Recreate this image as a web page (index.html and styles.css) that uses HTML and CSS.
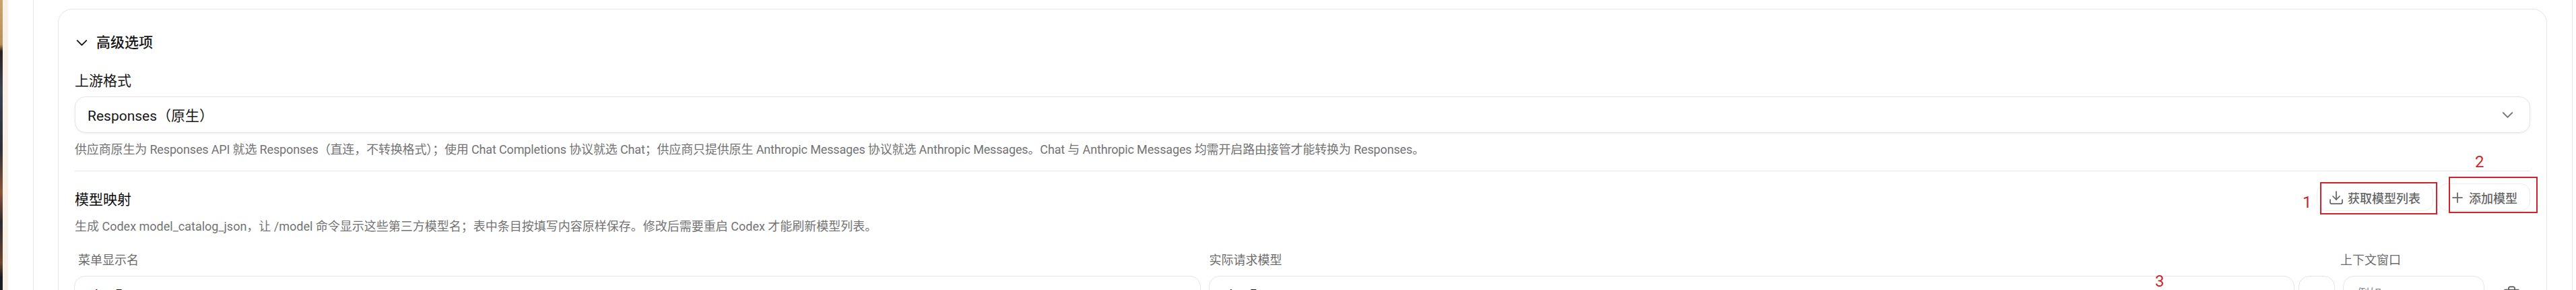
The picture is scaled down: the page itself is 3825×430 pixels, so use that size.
FILE: index.html
```html
<!DOCTYPE html>
<html lang="zh-CN">
<head>
    <meta charset="UTF-8">
    <meta name="viewport" content="width=device-width, initial-scale=1.0">
    <title>高级选项</title>
    <link rel="stylesheet" href="styles.css">
</head>
<body>

    <div class="photo-strip"></div>
    <div class="cream-strip"></div>

    <main class="content">
        <div class="panel">
            <section class="card">
                <div class="card-title">
                    <svg class="icon chevron-dark" viewBox="0 0 24 24"><path d="m6 9 6 6 6-6"/></svg>
                    <span>高级选项</span>
                </div>

                <div class="field-label">上游格式</div>
                <div class="select-box">
                    <span>Responses（原生）</span>
                    <svg class="icon chevron-gray" viewBox="0 0 24 24"><path d="m6 9 6 6 6-6"/></svg>
                </div>
                <p class="hint">供应商原生为 Responses API 就选 Responses（直连，不转换格式）；使用 Chat Completions 协议就选 Chat；供应商只提供原生 Anthropic Messages 协议就选 Anthropic Messages。Chat 与 Anthropic Messages 均需开启路由接管才能转换为 Responses。</p>

                <div class="mapping-head">
                    <div>
                        <div class="mapping-title">模型映射</div>
                        <p class="hint mapping-hint">生成 Codex model_catalog_json，让 /model 命令显示这些第三方模型名；表中条目按填写内容原样保存。修改后需要重启 Codex 才能刷新模型列表。</p>
                    </div>
                    <div class="mapping-actions">
                        <button class="btn">
                            <svg class="icon" viewBox="0 0 24 24"><path d="M12 15V3"/><path d="M21 15v4a2 2 0 0 1-2 2H5a2 2 0 0 1-2-2v-4"/><path d="m7 10 5 5 5-5"/></svg>
                            <span>获取模型列表</span>
                        </button>
                        <button class="btn">
                            <svg class="icon" viewBox="0 0 24 24"><path d="M5 12h14"/><path d="M12 5v14"/></svg>
                            <span>添加模型</span>
                        </button>
                    </div>
                </div>

                <div class="model-grid">
                    <div class="col-label col-label-name">菜单显示名</div>
                    <div class="col-label col-label-model">实际请求模型</div>
                    <div class="col-label col-label-context">上下文窗口</div>
                    <div></div>

                    <div class="text-input">glm-5</div>
                    <div class="model-cell">
                        <div class="text-input">glm-5</div>
                        <div class="small-box"></div>
                    </div>
                    <div class="text-input placeholder">例如</div>
                    <div class="delete-cell">
                        <svg class="icon trash" viewBox="0 0 24 24"><path d="M3 6h18"/><path d="M19 6v14c0 1-1 2-2 2H7c-1 0-2-1-2-2V6"/><path d="M8 6V4c0-1 1-2 2-2h4c1 0 2 1 2 2v2"/></svg>
                    </div>
                </div>
            </section>
        </div>
    </main>

    <!-- red notes drawn on top of the screenshot -->
    <div class="note-box note-box-1"></div>
    <div class="note-box note-box-2"></div>
    <span class="note-num note-num-1">1</span>
    <span class="note-num note-num-2">2</span>
    <span class="note-num note-num-3">3</span>

</body>
</html>
```

FILE: styles.css
```css
html, body {
    height: 430px;
    overflow: hidden;
}
body {
    margin: 0;
    display: flex;
    position: relative;
    background-color: white;
    font-family: Roboto, "Noto Sans CJK SC", sans-serif;
    font-size: 21px;
    color: #171717;
}
.photo-strip {
    width: 4px;
    background: linear-gradient(to bottom, #c9a26e 0, #b98f5c 66px, #2a211d 76px, #3b4452 130px, #2b2f38 220px, #8a553a 285px, #2d2a30 330px, #6c4630 390px, #1b1d24 410px);
}
.cream-strip {
    width: 8px;
    background-color: #f9f1e8;
}
.content {
    flex: 1;
    padding-left: 37px;
    padding-right: 5px;
}
.panel {
    height: 430px;
    box-sizing: border-box;
    padding: 13px 37px 0 36px;
    border-left: 1px solid #e5e5e5;
    border-right: 1px solid #e5e5e5;
}
.card {
    height: 600px;
    padding: 0 24px;
    border: 1px solid #e5e5e5;
    border-radius: 21px;
}

.icon {
    width: 24px;
    height: 24px;
    flex-shrink: 0;
    fill: none;
    stroke: currentColor;
    stroke-width: 1.75;
    stroke-linecap: round;
    stroke-linejoin: round;
}
.chevron-dark, .chevron-gray {
    width: 27px;
    height: 27px;
}
.chevron-gray {
    color: #737373;
}
.trash {
    width: 27px;
    height: 27px;
    color: #666;
}

.card-title {
    display: flex;
    align-items: center;
    gap: 8px;
    height: 30px;
    margin-top: 34px;
    margin-left: -3px;
    line-height: 30px;
    font-weight: 500;
}
.field-label {
    height: 30px;
    margin-top: 27px;
    line-height: 30px;
}
.select-box {
    display: flex;
    align-items: center;
    justify-content: space-between;
    height: 54px;
    box-sizing: border-box;
    margin-top: 8px;
    padding: 0 19px 0 18px;
    border: 1px solid #e5e5e5;
    border-radius: 16px;
    box-shadow: 0 1px 3px rgba(0, 0, 0, 0.08);
}
.hint {
    margin: 0;
    height: 24px;
    font-size: 18px;
    line-height: 24px;
    color: #737373;
    white-space: nowrap;
}
.select-box + .hint {
    margin-top: 13px;
    letter-spacing: -0.15px;
}

.mapping-head {
    display: flex;
    justify-content: space-between;
    height: 121px;
    box-sizing: border-box;
    margin-top: 19px;
    border-top: 1px solid #e5e5e5;
}
.mapping-title {
    height: 30px;
    margin-top: 27px;
    line-height: 30px;
    color: #0a0a0a;
}
.mapping-hint {
    margin-top: 13px;
}
.mapping-actions {
    display: flex;
    gap: 7px;
    margin-top: 18px;
}
.btn {
    display: flex;
    align-items: center;
    gap: 5px;
    height: 41px;
    padding: 0 18px 0 16px;
    border: 1px solid #ededed;
    border-radius: 14px;
    background-color: white;
    font-family: inherit;
    font-size: 18px;
    font-weight: 500;
    color: #666;
}

.model-grid {
    display: grid;
    grid-template-columns: 1fr 1fr 210px 56px;
    column-gap: 12px;
    margin-left: -1px;
}
.col-label {
    height: 24px;
    margin-bottom: 11px;
    font-size: 18px;
    line-height: 24px;
    color: #6b6b6b;
}
.col-label-name {
    padding-left: 6px;
}
.col-label-model {
    padding-left: 1px;
}
.col-label-context {
    margin-left: -4px;
}
.model-cell {
    display: flex;
    gap: 6px;
}
.model-cell .text-input {
    flex: 1;
}
.text-input {
    height: 54px;
    box-sizing: border-box;
    padding-left: 18px;
    border: 1px solid #e5e5e5;
    border-radius: 16px;
    line-height: 54px;
}
.placeholder {
    padding-left: 20px;
    color: #8a8a8a;
    font-size: 18px;
    line-height: 52px;
}
.small-box {
    width: 54px;
    height: 54px;
    box-sizing: border-box;
    border: 1px solid #e5e5e5;
    border-radius: 16px;
}
.delete-cell {
    display: flex;
    justify-content: center;
    padding-top: 14px;
}

.note-box {
    position: absolute;
    box-sizing: border-box;
    border: 2px solid #d2232a;
}
.note-box-1 {
    left: 3445px;
    top: 270px;
    width: 174px;
    height: 48px;
}
.note-box-2 {
    left: 3636px;
    top: 262px;
    width: 132px;
    height: 54px;
}
.note-num {
    position: absolute;
    font-size: 24px;
    line-height: 24px;
    color: #d2232a;
}
.note-num-1 {
    left: 3419px;
    top: 288px;
}
.note-num-2 {
    left: 3675px;
    top: 228px;
}
.note-num-3 {
    left: 3200px;
    top: 405px;
}
```
